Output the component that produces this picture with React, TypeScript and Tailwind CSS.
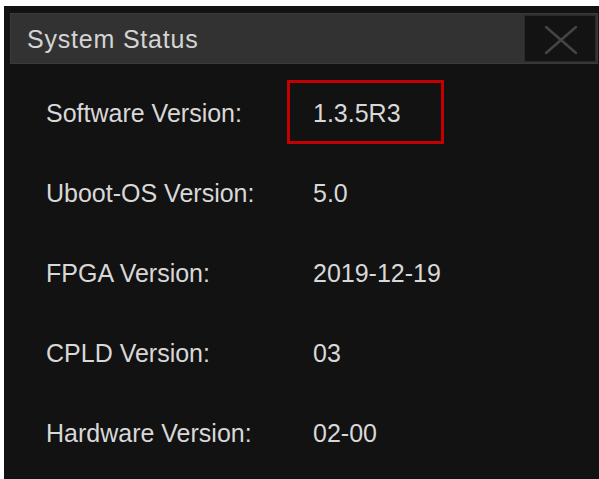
import React from "react";

const rows: { label: string; value: string; highlight?: boolean }[] = [
  { label: "Software Version:", value: "1.3.5R3", highlight: true },
  { label: "Uboot-OS Version:", value: "5.0" },
  { label: "FPGA Version:", value: "2019-12-19" },
  { label: "CPLD Version:", value: "03" },
  { label: "Hardware Version:", value: "02-00" },
];

export default function App() {
  return (
    <div className="w-[599px] h-[479px] bg-white pt-[6px] pl-[4px] overflow-hidden" style={{ fontFamily: '"Liberation Sans", Arial, sans-serif' }}>
      <div className="h-[473px] bg-[#121212] pt-[7px] pl-[6px] pr-[1px]">
        {/* title bar */}
        <div className="h-[51px] flex items-center bg-[#323232] border border-[#3a3a3a]">
          <div className="flex-1 pl-[16px] pt-[1px] text-[25px] tracking-[0.8px] text-[#d4d4d4] leading-none">System Status</div>
          <div className="w-[72px] h-[47px] mr-[1px] bg-[#131313] border border-[#2a2a2a] flex items-center justify-center">
            <svg width="34" height="30" viewBox="0 0 34 30" className="ml-[2px] mt-[2px]">
              <path d="M2 2 L32 28 M32 2 L2 28" stroke="#454545" strokeWidth="2.5" strokeLinecap="round" />
            </svg>
          </div>
        </div>
        {/* version list */}
        <div className="pt-[8px]">
          {rows.map((r) => (
            <div key={r.label} className="h-[80px] flex items-center text-[25px] text-[#d8d8d8]">
              <div className="w-[277px] pl-[36px] pt-[4px]">{r.label}</div>
              <div
                className={
                  r.highlight
                    ? "w-[157px] h-[64px] flex items-center pl-[23px] pt-[4px] border-[3px] border-[#c40000]"
                    : "w-[157px] h-[64px] flex items-center pl-[23px] pt-[4px] border-[3px] border-transparent"
                }
              >
                {r.value}
              </div>
            </div>
          ))}
        </div>
      </div>
    </div>
  );
}
